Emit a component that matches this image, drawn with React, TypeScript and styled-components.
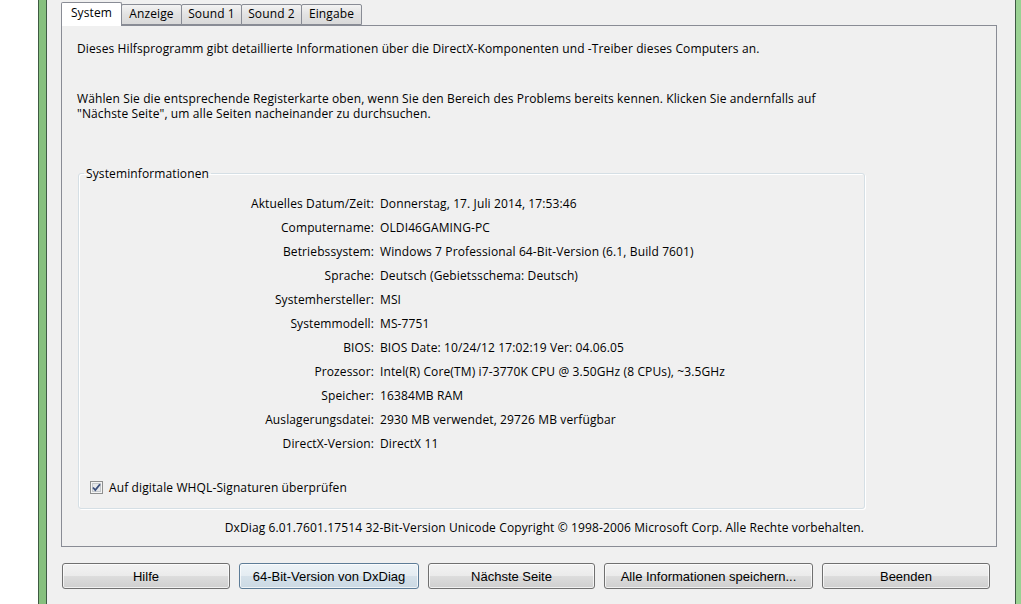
import React from 'react'
import styled, { createGlobalStyle } from 'styled-components'

const UI_FONT = '"Segoe UI", "Open Sans", "Noto Sans", sans-serif'
const BUTTON_FONT = '"Liberation Sans", Arial, sans-serif'

const GlobalStyle = createGlobalStyle`
  html, body {
    margin: 0;
    padding: 0;
    background: #ffffff;
    overflow: hidden;
  }
`

const TABS = ['System', 'Anzeige', 'Sound 1', 'Sound 2', 'Eingabe']

const INFO: [string, string][] = [
  ['Aktuelles Datum/Zeit:', 'Donnerstag, 17. Juli 2014, 17:53:46'],
  ['Computername:', 'OLDI46GAMING-PC'],
  ['Betriebssystem:', 'Windows 7 Professional 64-Bit-Version (6.1, Build 7601)'],
  ['Sprache:', 'Deutsch (Gebietsschema: Deutsch)'],
  ['Systemhersteller:', 'MSI'],
  ['Systemmodell:', 'MS-7751'],
  ['BIOS:', 'BIOS Date: 10/24/12 17:02:19 Ver: 04.06.05'],
  ['Prozessor:', 'Intel(R) Core(TM) i7-3770K CPU @ 3.50GHz (8 CPUs), ~3.5GHz'],
  ['Speicher:', '16384MB RAM'],
  ['Auslagerungsdatei:', '2930 MB verwendet, 29726 MB verfügbar'],
  ['DirectX-Version:', 'DirectX 11'],
]

const BUTTONS: { label: string; width: number; isDefault?: boolean }[] = [
  { label: 'Hilfe', width: 168 },
  { label: '64-Bit-Version von DxDiag', width: 180, isDefault: true },
  { label: 'Nächste Seite', width: 167 },
  { label: 'Alle Informationen speichern...', width: 209 },
  { label: 'Beenden', width: 168 },
]

// 체크 표시 아이콘
const CheckMark = () => (
  <svg width='13' height='13' viewBox='0 0 13 13'>
    <rect x='0.5' y='0.5' width='12' height='12' fill='#f4f4f4' stroke='#8e8f8f' />
    <rect x='2.5' y='2.5' width='8' height='8' fill='#e6e8ea' stroke='#c5c9cc' />
    <path d='M3 6.5 L5.3 9 L10 3.2' fill='none' stroke='#3b4f7c' strokeWidth='1.8' />
  </svg>
)

const App: React.FC = () => {
  return (
    <>
      <GlobalStyle />
      <Screen>
        <Desktop />
        <WindowFrame>
          <WindowBody>
            <TabRow>
              {TABS.map((tab, i) => (
                <Tab key={tab} $active={i === 0}>
                  {tab}
                </Tab>
              ))}
            </TabRow>

            <TabPanel>
              <Paragraph>
                Dieses Hilfsprogramm gibt detaillierte Informationen über die DirectX-Komponenten und -Treiber dieses Computers an.
              </Paragraph>
              <Paragraph $gap={35}>
                Wählen Sie die entsprechende Registerkarte oben, wenn Sie den Bereich des Problems bereits kennen. Klicken Sie andernfalls auf
                <br />
                "Nächste Seite", um alle Seiten nacheinander zu durchsuchen.
              </Paragraph>

              <GroupBox>
                <GroupLegend>Systeminformationen</GroupLegend>
                <InfoGrid>
                  {INFO.map(([label, value]) => (
                    <React.Fragment key={label}>
                      <InfoLabel>{label}</InfoLabel>
                      <InfoValue>{value}</InfoValue>
                    </React.Fragment>
                  ))}
                </InfoGrid>
                <CheckRow>
                  <CheckMark />
                  <span>Auf digitale WHQL-Signaturen überprüfen</span>
                </CheckRow>
              </GroupBox>

              <Footer>DxDiag 6.01.7601.17514 32-Bit-Version Unicode Copyright © 1998-2006 Microsoft Corp. Alle Rechte vorbehalten.</Footer>
            </TabPanel>

            <ButtonRow>
              {BUTTONS.map((b) => (
                <PushButton key={b.label} $width={b.width} $default={b.isDefault}>
                  {b.label}
                </PushButton>
              ))}
            </ButtonRow>
          </WindowBody>
        </WindowFrame>
      </Screen>
    </>
  )
}

export default App

// ----- 레이아웃 ----- //
const Screen = styled.div`
  display: flex;
  width: 1021px;
  height: 604px;
  overflow: hidden;
`

const Desktop = styled.div`
  width: 38px;
  flex: none;
  background: #ffffff;
`

const WindowFrame = styled.div`
  flex: 1;
  display: flex;
  border-left: 1px solid #3d5a41;
  padding: 0 5px 0 7px;
  background: linear-gradient(90deg, #86c07e, #9ad293);
`

const WindowBody = styled.div`
  flex: 1;
  display: flex;
  flex-direction: column;
  background: #f0f0f0;
  border-left: 1px solid #3e5a44;
  border-right: 1px solid #3e5a44;
  padding: 2px 18px 0 14px;
  font-family: ${UI_FONT};
  font-size: 12px;
  letter-spacing: 0.12px;
  color: #000;
`

// ----- 탭 ----- //
const TabRow = styled.div`
  display: flex;
  align-items: flex-end;
  height: 23px;
`

const Tab = styled.div<{ $active?: boolean }>`
  position: relative;
  z-index: ${(p) => (p.$active ? 2 : 1)};
  box-sizing: border-box;
  width: 61px;
  height: ${(p) => (p.$active ? 24 : 21)}px;
  margin-bottom: ${(p) => (p.$active ? -1 : 0)}px;
  margin-left: -1px;
  padding-top: ${(p) => (p.$active ? 2 : 1)}px;
  border: 1px solid #898c95;
  border-bottom: ${(p) => (p.$active ? 'none' : '1px solid #898c95')};
  border-radius: 2px 2px 0 0;
  background: ${(p) => (p.$active ? '#ffffff' : 'linear-gradient(#f3f3f3, #e2e2e2 50%, #d9d9d9)')};
  line-height: 16px;
  text-align: center;
  white-space: nowrap;

  &:first-child {
    margin-left: 0;
  }
`

const TabPanel = styled.div`
  box-sizing: border-box;
  width: 936px;
  height: 522px;
  border: 1px solid #898c95;
  background: #f0f0f0;
  display: flex;
  flex-direction: column;
  padding: 0 0 0 15px;
`

const Paragraph = styled.p<{ $gap?: number }>`
  margin: ${(p) => p.$gap ?? 15}px 0 0;
  line-height: 15px;
  white-space: nowrap;
`

// ----- 그룹 박스 ----- //
const GroupBox = styled.fieldset`
  box-sizing: border-box;
  width: 787px;
  margin: 45px 0 0 1px;
  padding: 0 0 13px;
  border: 1px solid #d5dfe5;
  border-radius: 3px;
  box-shadow: 1px 1px 0 #ffffff, inset 1px 1px 0 #ffffff;
`

const GroupLegend = styled.legend`
  margin-left: 5px;
  padding: 0 2px;
  line-height: 15px;
`

const InfoGrid = styled.div`
  display: grid;
  grid-template-columns: 295px 1fr;
  grid-auto-rows: 24px;
  column-gap: 6px;
  margin-top: 11px;
  line-height: 24px;
`

const InfoLabel = styled.div`
  text-align: right;
  white-space: nowrap;
`

const InfoValue = styled.div`
  white-space: nowrap;
`

const CheckRow = styled.div`
  display: flex;
  align-items: center;
  gap: 6px;
  margin: 24px 0 0 11px;
  height: 15px;
  line-height: 15px;
`

const Footer = styled.div`
  margin: 11px 0 0;
  width: 787px;
  text-align: right;
  line-height: 15px;
  white-space: nowrap;
`

// ----- 버튼 ----- //
const ButtonRow = styled.div`
  display: flex;
  gap: 9px;
  margin: 16px 0 0 1px;
`

const PushButton = styled.button<{ $width: number; $default?: boolean }>`
  box-sizing: border-box;
  width: ${(p) => p.$width}px;
  height: 26px;
  padding: 0;
  border: 1px solid ${(p) => (p.$default ? '#5d7c97' : '#707070')};
  border-radius: 3px;
  background: ${(p) =>
    p.$default
      ? 'linear-gradient(#edf3f7 0%, #e4ecf2 50%, #d5e1ea 50%, #cbd9e4 100%)'
      : 'linear-gradient(#f2f2f2 0%, #ebebeb 50%, #dddddd 50%, #cfcfcf 100%)'};
  box-shadow: inset 0 0 0 1px rgba(255, 255, 255, 0.7);
  font-family: ${BUTTON_FONT};
  font-size: 13px;
  color: #000;
  cursor: pointer;
`
